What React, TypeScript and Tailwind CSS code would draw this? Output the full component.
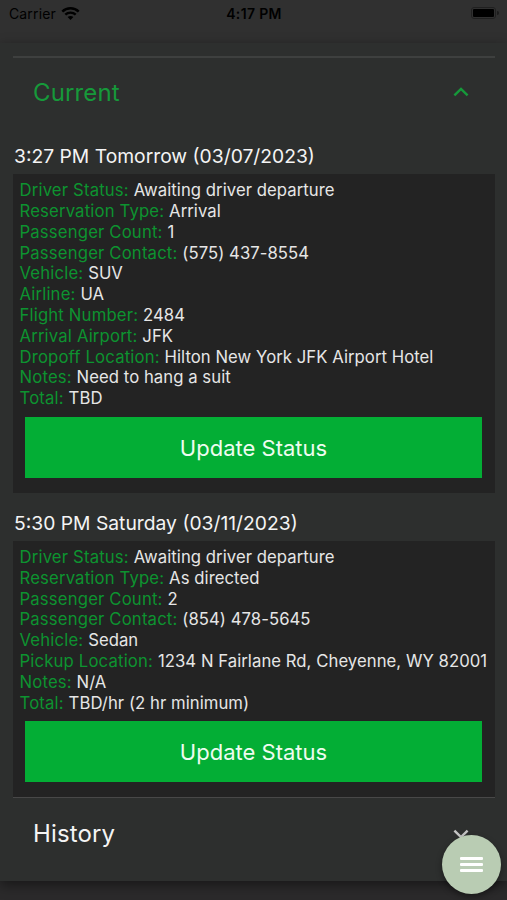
import React from "react";

interface Detail {
  label: string;
  value: string;
}

interface Reservation {
  id: number;
  title: string;
  details: Detail[];
}

const reservations: Reservation[] = [
  {
    id: 1,
    title: "3:27 PM Tomorrow (03/07/2023)",
    details: [
      { label: "Driver Status", value: "Awaiting driver departure" },
      { label: "Reservation Type", value: "Arrival" },
      { label: "Passenger Count", value: "1" },
      { label: "Passenger Contact", value: "(575) 437-8554" },
      { label: "Vehicle", value: "SUV" },
      { label: "Airline", value: "UA" },
      { label: "Flight Number", value: "2484" },
      { label: "Arrival Airport", value: "JFK" },
      { label: "Dropoff Location", value: "Hilton New York JFK Airport Hotel" },
      { label: "Notes", value: "Need to hang a suit" },
      { label: "Total", value: "TBD" },
    ],
  },
  {
    id: 2,
    title: "5:30 PM Saturday (03/11/2023)",
    details: [
      { label: "Driver Status", value: "Awaiting driver departure" },
      { label: "Reservation Type", value: "As directed" },
      { label: "Passenger Count", value: "2" },
      { label: "Passenger Contact", value: "(854) 478-5645" },
      { label: "Vehicle", value: "Sedan" },
      { label: "Pickup Location", value: "1234 N Fairlane Rd, Cheyenne, WY 82001" },
      { label: "Notes", value: "N/A" },
      { label: "Total", value: "TBD/hr (2 hr minimum)" },
    ],
  },
];

const StatusBar: React.FC = () => (
  <div className="grid h-[43px] grid-cols-3 items-start bg-[#303030] pt-[4px] pr-[8px] pl-[9px] text-[14px] leading-[20px] text-black shadow-[0_0_2px_rgba(0,0,0,0.35)]">
    <div className="flex items-center gap-[5px]">
      <span className="tracking-[0.01em]">Carrier</span>
      <svg width="19" height="14" viewBox="0 0 19 14" fill="none" stroke="currentColor">
        <path d="M1.3 4.6C5.8.2 13.2.2 17.7 4.6" strokeWidth="2.5" />
        <path d="M4.3 7.7c2.9-2.8 7.5-2.8 10.4 0" strokeWidth="2.4" />
        <path d="M6.6 10c1.7-1.5 4.1-1.5 5.8 0L9.5 13z" fill="currentColor" stroke="none" />
      </svg>
    </div>
    <div className="text-center font-semibold tracking-[0.025em]">4:17 PM</div>
    <div className="flex h-[18px] items-center justify-end gap-px">
      <div className="h-[12px] w-[25px] rounded-[3px] border border-[#202020] p-px">
        <div className="h-full w-full rounded-[1px] bg-black" />
      </div>
      <div className="h-[4px] w-[2px] rounded-r-full bg-[#1c1c1c]" />
    </div>
  </div>
);

const Chevron: React.FC<{ up?: boolean }> = ({ up }) => (
  <svg width="16" height="10" viewBox="0 0 16 10" fill="none" stroke="currentColor" strokeWidth="2.4">
    <path d={up ? "M1.4 8.4 8 1.9l6.6 6.5" : "M1.4 1.6 8 8.1l6.6-6.5"} />
  </svg>
);

const ReservationCard: React.FC<{ reservation: Reservation }> = ({ reservation }) => (
  <section>
    <h2 className="h-[48px] pt-[17px] pl-px text-[19.3px] leading-[26px] text-[#f4f4f4]">
      {reservation.title}
    </h2>
    <div className="bg-[#232323] pt-[6.2px] pb-[15px]">
      <div className="pl-[6.5px] text-[16.7px] leading-[20.8px] whitespace-nowrap">
        {reservation.details.map((detail) => (
          <div key={detail.label}>
            <span className="tracking-[0.01em] text-[#0d9330]">{detail.label}: </span>
            <span className="tracking-[0.003em] text-[#e6e6e6]">{detail.value}</span>
          </div>
        ))}
      </div>
      <button className="mx-[12px] mt-[7.8px] block h-[61px] w-[457px] bg-[#03ae35] pt-[2px] text-[22px] text-[#eefcf0]">
        Update Status
      </button>
    </div>
  </section>
);

const App: React.FC = () => {
  return (
    <div className="relative h-[900px] w-[507px] overflow-hidden bg-[#2b2a2b] font-['Inter',sans-serif]">
      <StatusBar />

      <main className="h-[838px] bg-[#2d2f2e] pt-[13px] pr-[12px] pl-[13px] shadow-[0_4px_12px_rgba(0,0,0,0.45)]">
        <div className="flex h-[70px] items-center justify-between border-t-2 border-[#3e403f] pr-[26px] pl-[20px] text-[#16993a]">
          <h1 className="pt-[2px] text-[24px] tracking-[0.006em]">Current</h1>
          <Chevron up />
        </div>

        {reservations.map((reservation) => (
          <ReservationCard key={reservation.id} reservation={reservation} />
        ))}

        <div className="flex h-[73px] items-center justify-between border-t border-[#484848] pr-[26px] pl-[20px] text-[#f4f4f4]">
          <h1 className="text-[24px] tracking-[0.006em]">History</h1>
          <span className="text-[#c4c4c4]">
            <Chevron />
          </span>
        </div>
      </main>

      {/* Floating menu button */}
      <button className="absolute top-[835px] left-[442px] flex h-[59px] w-[59px] flex-col items-center justify-center gap-[3px] rounded-full bg-[#b9ccb3] shadow-[0_3px_6px_rgba(0,0,0,0.4)]">
        <span className="h-[3px] w-[23px] rounded-[1px] bg-white" />
        <span className="h-[3px] w-[23px] rounded-[1px] bg-white" />
        <span className="h-[3px] w-[23px] rounded-[1px] bg-white" />
      </button>
    </div>
  );
};

export default App;
